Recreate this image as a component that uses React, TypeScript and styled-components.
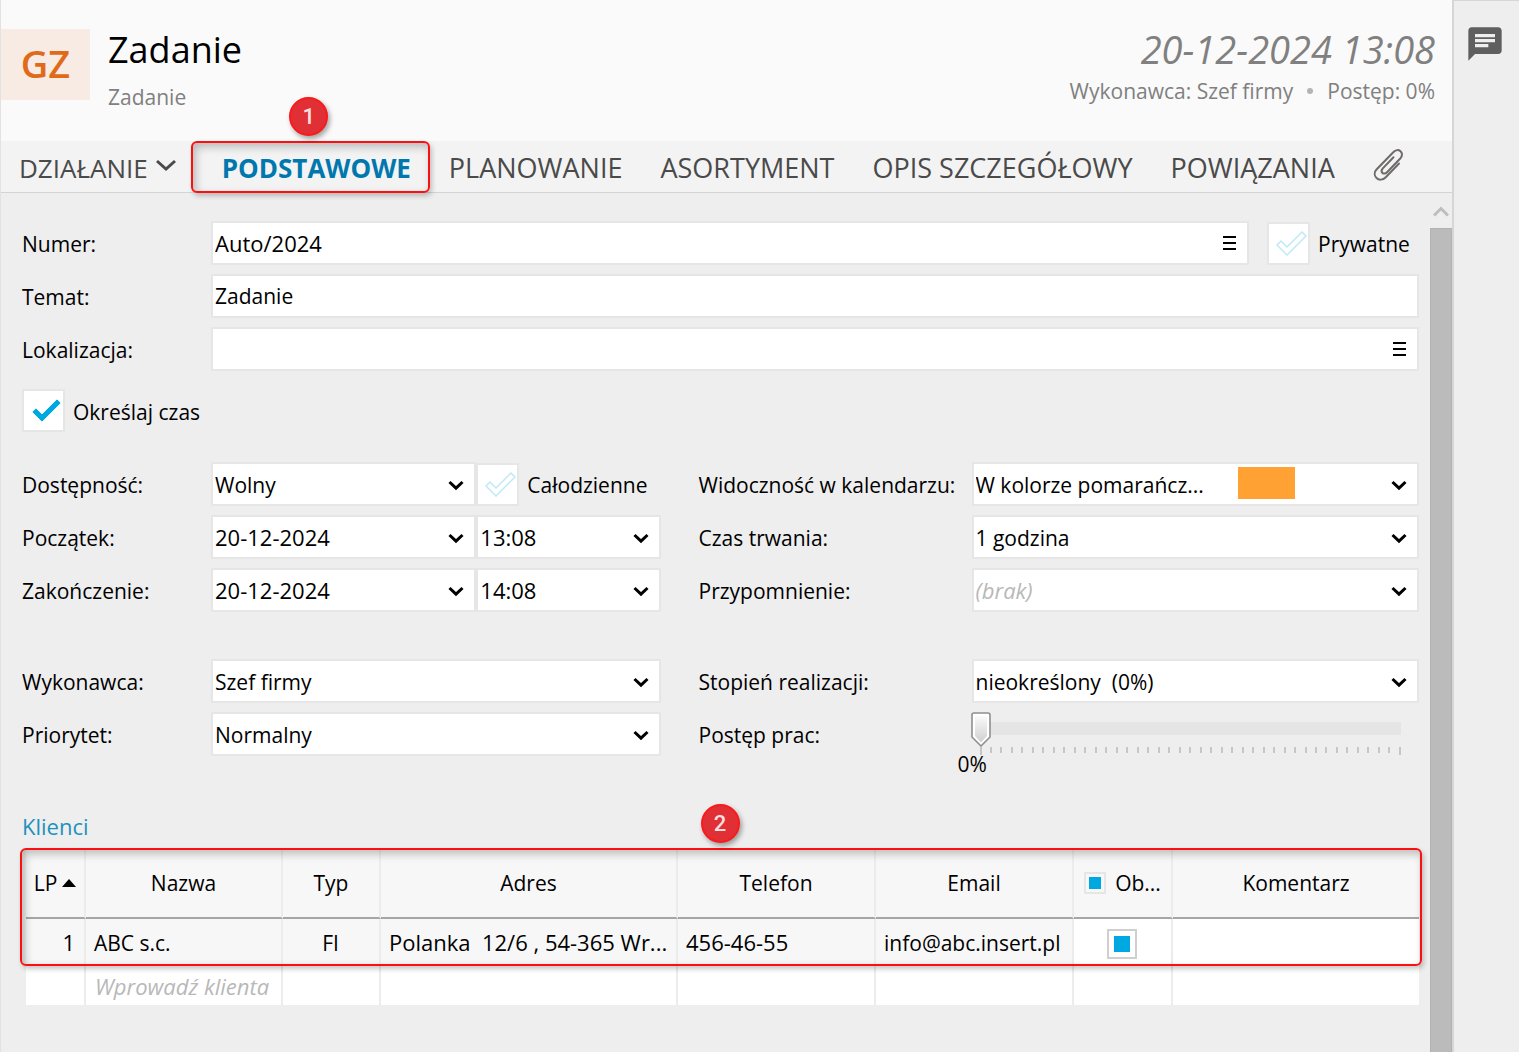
import React, { useState } from "react";
import styled, { createGlobalStyle, css } from "styled-components";
import { MdChat } from "react-icons/md";

const GlobalStyle = createGlobalStyle`
  *, *::before, *::after { box-sizing: border-box; }
  body {
    margin: 0;
    background: #eeeeee;
    color: #000;
    font: 400 21px/30px "Open Sans", "Noto Sans", sans-serif;
  }
  button, input, select { font: inherit; color: inherit; }
`;

const Window = styled.div`
  display: flex;
  min-height: 100vh;
`;

const Main = styled.main`
  display: flex;
  flex: 1;
  flex-direction: column;
  min-width: 0;
  border-left: 1px solid #e2e2e2;
`;

const SidePanel = styled.aside`
  width: 67px;
  padding-top: 23px;
  border-top: 1px solid #d6d6d6;
  border-left: 2px solid #d6d6d6;
  background: #eeeeee;
`;

const IconButton = styled.button`
  display: flex;
  margin: 0;
  padding: 0;
  border: 0;
  background: none;
  color: #5f5f5f;
  cursor: pointer;
`;

const ChatButton = styled(IconButton)`
  margin-left: 11px;
`;

const Header = styled.header`
  display: flex;
  height: 141px;
  padding-right: 17px;
  background: #fafafa;
`;

const Avatar = styled.div`
  display: flex;
  align-items: center;
  justify-content: center;
  width: 89px;
  height: 71px;
  margin: 29px 18px 0 0;
  padding-bottom: 4px;
  background: #f8ebe3;
  color: #e06a1a;
  font-size: 38px;
  font-weight: 600;
`;

const HeaderText = styled.div<{ $end?: boolean }>`
  padding-top: 25px;
  color: #808080;
  ${(p) => p.$end && css`margin-left: auto; text-align: right;`}
`;

const Title = styled.h1`
  margin: 0 0 7px;
  color: #000;
  font-size: 36px;
  font-weight: 400;
  line-height: 50px;
`;

const DateLine = styled.div`
  margin-bottom: 3px;
  font-size: 38px;
  font-style: italic;
  line-height: 48px;
`;

const Summary = styled.div`
  display: flex;
  align-items: center;
  justify-content: flex-end;
  gap: 14px;
`;

const Dot = styled.span`
  width: 6px;
  height: 6px;
  border-radius: 50%;
  background: #b4b4b4;
`;

const Tabs = styled.nav`
  display: flex;
  height: 52px;
  border-bottom: 1px solid #d4d4d4;
  background: #f3f3f3;
`;

const Tab = styled.button<{ $active?: boolean }>`
  display: flex;
  align-items: center;
  height: 52px;
  padding: 2px 19px 0;
  border: 0;
  background: none;
  color: ${(p) => (p.$active ? "#0078ae" : "#4a4a4a")};
  font-size: ${(p) => (p.$active ? 26 : 27)}px;
  font-weight: ${(p) => (p.$active ? 700 : 400)};
  white-space: nowrap;
  cursor: pointer;
`;

const MenuTab = styled(Tab)`
  gap: 8px;
  padding-left: 18px;
  font-size: 26px;
`;

const ClipTab = styled(Tab)`
  padding-top: 0;
  padding-bottom: 4px;
`;

const TabMark = styled.div`
  position: relative;
  margin-left: 8px;
`;

const frame = css`
  position: absolute;
  border: 2px solid #fb0f0f;
  border-radius: 6px;
  box-shadow: 2px 3px 5px rgba(0, 0, 0, 0.22), inset 3px 4px 8px rgba(0, 0, 0, 0.24);
  pointer-events: none;
`;

const TabFrame = styled.div`
  ${frame}
  inset: 0 0 -1px -12px;
`;

const TableFrame = styled.div`
  ${frame}
  top: -2px;
  right: -3px;
  left: -6px;
  height: 118px;
`;

const Badge = styled.span`
  position: absolute;
  display: flex;
  align-items: center;
  justify-content: center;
  width: 39px;
  height: 39px;
  border: 2px solid #f91b1b;
  border-radius: 50%;
  background: #e03036;
  box-shadow: 2px 3px 5px rgba(0, 0, 0, 0.35);
  color: #fbdede;
  font: 500 22px/24px Roboto, sans-serif;
`;

const TabBadge = styled(Badge)`
  top: -44px;
  left: calc(50% - 27px);
`;

const TableBadge = styled(Badge)`
  top: -46px;
  left: calc(50% - 22px);
`;

const Body = styled.div`
  display: flex;
  flex: 1;
`;

const Form = styled.form`
  flex: 1;
  min-width: 0;
  padding: 28px 11px 0 21px;
`;

const Scrollbar = styled.div`
  display: flex;
  flex-direction: column;
  width: 22px;
`;

const ScrollUp = styled.div`
  display: flex;
  align-items: center;
  justify-content: center;
  height: 35px;
`;

const ScrollThumb = styled.div`
  flex: 1;
  border: 1px solid #b2b2b2;
  border-bottom: 0;
  background: #bbbbbb;
`;

const Row = styled.div`
  display: flex;
  align-items: center;
  min-height: 44px;
  margin-bottom: 9px;
`;

const Columns = styled.div<{ $top: number }>`
  display: grid;
  grid-template-columns: minmax(0, 1fr) minmax(0, calc(50% + 22px));
  column-gap: 38px;
  margin-top: ${(p) => p.$top}px;
`;

const Label = styled.label<{ $wide?: boolean }>`
  flex: none;
  width: ${(p) => (p.$wide ? 273 : 189)}px;
  padding-top: 2px;
  white-space: nowrap;
`;

const Field = styled.div<{ $grow?: number }>`
  position: relative;
  display: flex;
  flex: ${(p) => p.$grow ?? 1} 1 0;
  align-items: center;
  min-width: 0;
`;

const control = css`
  width: 100%;
  height: 44px;
  margin: 0;
  border: 2px solid #e6e6e6;
  border-radius: 0;
  background: #fff;
  outline: none;
`;

const TextInput = styled.input<{ $numeric?: boolean }>`
  ${control}
  padding: 0 56px 0 2px;
  ${(p) => p.$numeric && css`font-size: 22px;`}
`;

const Select = styled.select<{ $muted?: boolean; $numeric?: boolean }>`
  ${control}
  appearance: none;
  padding: 1px 36px 0 2px;
  ${(p) => p.$numeric && css`padding-top: 0; font-size: 22px;`}
  ${(p) => p.$muted && css`padding-top: 0; color: #b8b8b8; font-size: 22px; font-style: italic;`}
`;

const FieldIcon = styled.span`
  position: absolute;
  right: 12px;
  display: flex;
  margin-top: 2px;
  pointer-events: none;
`;

const MenuButton = styled(IconButton)`
  position: absolute;
  right: 13px;
  color: #000;
`;

const Swatch = styled.span`
  position: absolute;
  left: 266px;
  width: 57px;
  height: 32px;
  margin-bottom: 2px;
  background: #ffa133;
  pointer-events: none;
`;

const CheckLabel = styled.label<{ $lead?: number; $width?: string }>`
  display: flex;
  flex: none;
  align-items: center;
  gap: 8px;
  width: ${(p) => p.$width ?? "auto"};
  margin-left: ${(p) => p.$lead ?? 0}px;
  white-space: nowrap;
`;

const CheckText = styled.span`
  padding-top: 2px;
`;

const CheckBox = styled.span`
  position: relative;
  display: flex;
  width: 43px;
  height: 43px;
`;

const CheckInput = styled.input`
  appearance: none;
  width: 43px;
  height: 43px;
  margin: 0;
  border: 2px solid #e6e6e6;
  background: #fff;
`;

const CheckMark = styled.svg`
  position: absolute;
  top: 9px;
  left: 9px;
  pointer-events: none;
`;

const Slider = styled.div`
  position: relative;
  flex: 1;
  min-width: 0;
  height: 44px;
  padding: 10px 18px 0 8px;
`;

const Range = styled.input`
  display: block;
  appearance: none;
  width: 100%;
  height: 13px;
  margin: 0;
  background: #e5e5e5;
  &::-webkit-slider-thumb {
    appearance: none;
    width: 18px;
    height: 34px;
    background: transparent;
  }
`;

const Ticks = styled.div`
  display: flex;
  justify-content: space-between;
  margin-top: 12px;
`;

const Tick = styled.span`
  width: 2px;
  height: 6px;
  background: #c6c6c6;
  &:first-child, &:last-child { height: 8px; }
`;

const ThumbTrack = styled.div`
  position: absolute;
  top: 0;
  right: 19px;
  left: 9px;
  pointer-events: none;
`;

const Thumb = styled.svg`
  position: absolute;
  top: 0;
  margin-left: -10px;
`;

const SliderValue = styled.output`
  position: absolute;
  top: 37px;
  left: -14px;
`;

const SectionTitle = styled.h2`
  margin: 46px 0 9px;
  color: #1c91bd;
  font-size: 22px;
  font-weight: 400;
  line-height: 30px;
`;

const TableWrap = styled.div`
  position: relative;
  margin-left: 4px;
`;

const Table = styled.table`
  width: 100%;
  border-collapse: separate;
  border-spacing: 0;
  table-layout: fixed;
`;

const HeadCell = styled.th<{ $w?: number }>`
  width: ${(p) => (p.$w ? `${p.$w}px` : "auto")};
  height: 69px;
  padding: 0 0 2px;
  border-right: 2px solid #ececec;
  border-bottom: 2px solid #a6a6a6;
  background: #f7f7f7;
  font-weight: 400;
  white-space: nowrap;
  &:last-child { border-right: 0; }
`;

const HeadContent = styled.div<{ $gap: number }>`
  display: flex;
  align-items: center;
  justify-content: center;
  gap: ${(p) => p.$gap}px;
`;

const Cell = styled.td<{ $align?: string; $white?: boolean; $numeric?: boolean }>`
  height: 46px;
  padding: ${(p) => (p.$numeric ? 0 : 1)}px 9px 0 8px;
  border-right: 2px solid #ececec;
  background: ${(p) => (p.$white ? "#fff" : "#f7f7f7")};
  overflow: hidden;
  text-align: ${(p) => p.$align ?? "left"};
  white-space: nowrap;
  ${(p) => p.$numeric && css`font-size: 22px;`}
  &:last-child { border-right: 0; }
`;

const EntryCell = styled(Cell)`
  height: 40px;
  padding-left: 9px;
  background: #fff;
`;

const EntryInput = styled.input`
  display: block;
  width: 100%;
  padding: 0;
  border: 0;
  background: none;
  font-size: 22px;
  outline: none;
  &::placeholder { color: #b8b8b8; font-style: italic; opacity: 1; }
`;

const SquareCheck = styled.input<{ $size: number; $edge: string }>`
  appearance: none;
  display: inline-grid;
  flex: none;
  place-content: center;
  width: ${(p) => p.$size}px;
  height: ${(p) => p.$size}px;
  margin: 0;
  border: 2px solid ${(p) => p.$edge};
  vertical-align: middle;
  &:checked::before {
    content: "";
    width: ${(p) => (p.$size > 24 ? 16 : 12)}px;
    height: ${(p) => (p.$size > 24 ? 16 : 12)}px;
    background: #00a8e1;
  }
`;

const Chevron = () => (
  <svg width="16" height="11" viewBox="0 0 16 11" fill="none" stroke="#000" strokeWidth="3">
    <path d="M1.5 2 8 8.2 14.5 2" />
  </svg>
);

const Burger = () => (
  <svg width="13" height="14" viewBox="0 0 13 14" fill="none" stroke="#000" strokeWidth="2">
    <path d="M0 1h13M0 7h13M0 13h13" />
  </svg>
);

const Clip = () => (
  <svg width="32" height="34" viewBox="0 0 32 34" fill="none" stroke="#706b6b" strokeWidth="2" strokeLinecap="round">
    <path d="M26 15.5 12.5 29.5C10 32 6 32.5 3.5 30S1.2 24 3.5 21.5L20.5 4C22.5 1.8 25.5 1.5 27.5 3.3S29.5 8 27.5 10.2L14 24.2C12.5 25.8 10.5 26 9.3 24.7S8.5 21.8 9.8 20.3L20.5 9.2" />
  </svg>
);

interface CheckProps {
  label: string;
  initial?: boolean;
  lead?: number;
  width?: string;
}

function Check({ label, initial = false, lead, width }: CheckProps) {
  const [on, setOn] = useState(initial);
  return (
    <CheckLabel $lead={lead} $width={width}>
      <CheckBox>
        <CheckInput type="checkbox" checked={on} onChange={() => setOn(!on)} />
        <CheckMark width="31" height="25" viewBox="0 0 31 25">
          <path
            d="M1 14 5 10 11 16 26 1 30 5 11 24Z"
            fill={on ? "#00a8e1" : "none"}
            stroke={on ? "#d9f2fb" : "#bfe9f7"}
            strokeWidth={on ? 1 : 1.5}
          />
        </CheckMark>
      </CheckBox>
      <CheckText>{label}</CheckText>
    </CheckLabel>
  );
}

interface DropProps {
  id: string;
  value: string;
  name?: string;
  grow?: number;
  muted?: boolean;
  numeric?: boolean;
  swatch?: boolean;
}

function Drop({ id, value, name, grow, muted, numeric, swatch }: DropProps) {
  return (
    <Field $grow={grow}>
      <Select id={id} aria-label={name} $muted={muted} $numeric={numeric} defaultValue={value}>
        <option>{value}</option>
      </Select>
      {swatch && <Swatch />}
      <FieldIcon>
        <Chevron />
      </FieldIcon>
    </Field>
  );
}

function Progress() {
  const [value, setValue] = useState(0);
  return (
    <Slider>
      <Range
        id="postep"
        type="range"
        min={0}
        max={100}
        value={value}
        onChange={(e) => setValue(Number(e.target.value))}
      />
      <Ticks>
        {Array.from({ length: 41 }, (_, i) => (
          <Tick key={i} />
        ))}
      </Ticks>
      <ThumbTrack>
        <Thumb width="20" height="35" viewBox="0 0 20 35" style={{ left: `${value}%` }}>
          <defs>
            <linearGradient id="thumb" x1="0" y1="0" x2="0" y2="1">
              <stop offset="0" stopColor="#fafafa" />
              <stop offset="1" stopColor="#cfcfcf" />
            </linearGradient>
          </defs>
          <path d="M3 1H17Q19 1 19 3V25L10 34 1 25V3Q1 1 3 1Z" fill="#fff" stroke="#8f8f8f" strokeWidth="1.6" />
          <path d="M4 4H16V24L10 30.5 4 24Z" fill="url(#thumb)" />
        </Thumb>
      </ThumbTrack>
      <SliderValue htmlFor="postep">{value}%</SliderValue>
    </Slider>
  );
}

const tabs = ["PLANOWANIE", "ASORTYMENT", "OPIS SZCZEGÓŁOWY", "POWIĄZANIA"];

export default function App() {
  return (
    <>
      <GlobalStyle />
      <Window>
        <Main>
          <Header>
            <Avatar>GZ</Avatar>
            <HeaderText>
              <Title>Zadanie</Title>
              <div>Zadanie</div>
            </HeaderText>
            <HeaderText $end>
              <DateLine>20-12-2024 13:08</DateLine>
              <Summary>
                <span>Wykonawca: Szef firmy</span>
                <Dot />
                <span>Postęp: 0%</span>
              </Summary>
            </HeaderText>
          </Header>

          <Tabs>
            <MenuTab type="button">
              DZIAŁANIE
              <svg width="20" height="18" viewBox="0 0 20 18" fill="none" stroke="#4a4a4a" strokeWidth="3">
                <path d="M1 2 10 10 19 2" />
              </svg>
            </MenuTab>
            <TabMark>
              <Tab type="button" $active>
                PODSTAWOWE
              </Tab>
              <TabFrame />
              <TabBadge>1</TabBadge>
            </TabMark>
            {tabs.map((t) => (
              <Tab type="button" key={t}>
                {t}
              </Tab>
            ))}
            <ClipTab type="button" aria-label="Załączniki">
              <Clip />
            </ClipTab>
          </Tabs>

          <Body>
            <Form>
              <Row>
                <Label htmlFor="numer">Numer:</Label>
                <Field>
                  <TextInput id="numer" defaultValue="Auto/2024" $numeric />
                  <MenuButton type="button" aria-label="Menu numeru">
                    <Burger />
                  </MenuButton>
                </Field>
                <Check label="Prywatne" lead={18} width="152px" />
              </Row>
              <Row>
                <Label htmlFor="temat">Temat:</Label>
                <Field>
                  <TextInput id="temat" defaultValue="Zadanie" />
                </Field>
              </Row>
              <Row>
                <Label htmlFor="lokalizacja">Lokalizacja:</Label>
                <Field>
                  <TextInput id="lokalizacja" />
                  <MenuButton type="button" aria-label="Menu lokalizacji">
                    <Burger />
                  </MenuButton>
                </Field>
              </Row>

              <Columns $top={18}>
                <Check label="Określaj czas" initial />
              </Columns>

              <Columns $top={30}>
                <div>
                  <Row>
                    <Label htmlFor="dostepnosc">Dostępność:</Label>
                    <Drop id="dostepnosc" value="Wolny" grow={265} />
                    <Field $grow={184}>
                      <Check label="Całodzienne" />
                    </Field>
                  </Row>
                  <Row>
                    <Label htmlFor="poczatek">Początek:</Label>
                    <Drop id="poczatek" value="20-12-2024" grow={265} numeric />
                    <Drop id="poczatek-godz" name="Godzina początku" value="13:08" grow={184} numeric />
                  </Row>
                  <Row>
                    <Label htmlFor="koniec">Zakończenie:</Label>
                    <Drop id="koniec" value="20-12-2024" grow={265} numeric />
                    <Drop id="koniec-godz" name="Godzina zakończenia" value="14:08" grow={184} numeric />
                  </Row>
                </div>
                <div>
                  <Row>
                    <Label $wide htmlFor="widocznosc">Widoczność w kalendarzu:</Label>
                    <Drop id="widocznosc" value="W kolorze pomarańcz..." swatch />
                  </Row>
                  <Row>
                    <Label $wide htmlFor="czas">Czas trwania:</Label>
                    <Drop id="czas" value="1 godzina" />
                  </Row>
                  <Row>
                    <Label $wide htmlFor="przypomnienie">Przypomnienie:</Label>
                    <Drop id="przypomnienie" value="(brak)" muted />
                  </Row>
                </div>
              </Columns>

              <Columns $top={38}>
                <div>
                  <Row>
                    <Label htmlFor="wykonawca">Wykonawca:</Label>
                    <Drop id="wykonawca" value="Szef firmy" />
                  </Row>
                  <Row>
                    <Label htmlFor="priorytet">Priorytet:</Label>
                    <Drop id="priorytet" value="Normalny" />
                  </Row>
                </div>
                <div>
                  <Row>
                    <Label $wide htmlFor="stopien">Stopień realizacji:</Label>
                    <Drop id="stopien" value={"nieokreślony\u00a0 (0%)"} />
                  </Row>
                  <Row>
                    <Label $wide htmlFor="postep">Postęp prac:</Label>
                    <Progress />
                  </Row>
                </div>
              </Columns>

              <SectionTitle>Klienci</SectionTitle>
              <TableWrap>
                <Table>
                  <thead>
                    <tr>
                      <HeadCell $w={60}>
                        <HeadContent $gap={5}>
                          LP
                          <svg width="14" height="8" viewBox="0 0 14 8">
                            <path d="M7 0 14 8H0Z" />
                          </svg>
                        </HeadContent>
                      </HeadCell>
                      <HeadCell $w={197}>Nazwa</HeadCell>
                      <HeadCell $w={98}>Typ</HeadCell>
                      <HeadCell $w={297}>Adres</HeadCell>
                      <HeadCell $w={198}>Telefon</HeadCell>
                      <HeadCell $w={198}>Email</HeadCell>
                      <HeadCell $w={99}>
                        <HeadContent $gap={9}>
                          <SquareCheck type="checkbox" aria-label="Zaznacz wszystkie" defaultChecked $size={22} $edge="#e6e6e6" />
                          Ob...
                        </HeadContent>
                      </HeadCell>
                      <HeadCell>Komentarz</HeadCell>
                    </tr>
                  </thead>
                  <tbody>
                    <tr>
                      <Cell $align="right" $numeric>1</Cell>
                      <Cell>ABC s.c.</Cell>
                      <Cell $align="center">FI</Cell>
                      <Cell $numeric>Polanka&nbsp; 12/6 , 54-365 Wr...</Cell>
                      <Cell $numeric>456-46-55</Cell>
                      <Cell>info@abc.insert.pl</Cell>
                      <Cell $align="center" $white>
                        <SquareCheck type="checkbox" aria-label="Obecność" defaultChecked $size={30} $edge="#cfcfcf" />
                      </Cell>
                      <Cell $white />
                    </tr>
                    <tr>
                      <EntryCell />
                      <EntryCell>
                        <EntryInput aria-label="Nowy klient" placeholder="Wprowadź klienta" />
                      </EntryCell>
                      <EntryCell />
                      <EntryCell />
                      <EntryCell />
                      <EntryCell />
                      <EntryCell />
                      <EntryCell />
                    </tr>
                  </tbody>
                </Table>
                <TableFrame />
                <TableBadge>2</TableBadge>
              </TableWrap>
            </Form>

            <Scrollbar>
              <ScrollUp>
                <svg width="16" height="12" viewBox="0 0 16 12" fill="none" stroke="#bdbdbd" strokeWidth="3">
                  <path d="M1 10.5 8 3.5 15 10.5" />
                </svg>
              </ScrollUp>
              <ScrollThumb />
            </Scrollbar>
          </Body>
        </Main>

        <SidePanel>
          <ChatButton type="button" aria-label="Komentarze">
            <MdChat size={40} />
          </ChatButton>
        </SidePanel>
      </Window>
    </>
  );
}
